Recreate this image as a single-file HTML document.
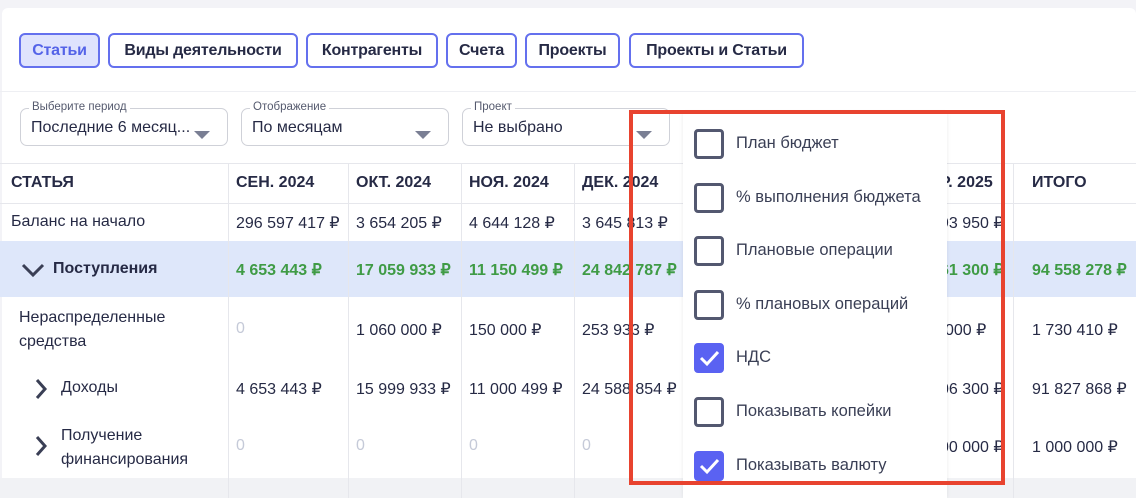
<!DOCTYPE html><html><head><meta charset="utf-8"><style>
*{margin:0;padding:0;box-sizing:border-box}
body{width:1136px;height:498px;overflow:hidden;background:#f3f3f7;font-family:"Liberation Sans",sans-serif;color:#262a45;position:relative}
.card{position:absolute;left:2px;top:8px;width:1134px;height:490px;background:#fff;border-radius:6px}
.a{position:absolute;white-space:nowrap}
.btn{position:absolute;top:33px;height:35px;border:2px solid #6470ee;border-radius:6px;font-weight:bold;font-size:16px;line-height:31px;text-align:center;background:#fff;letter-spacing:-0.2px}
.sel{position:absolute;top:108px;height:38px;border:1.5px solid #cfd1d8;border-radius:7px;font-size:16px}
.sel .l{position:absolute;top:-8px;left:8px;background:#fff;font-size:11.5px;color:#555a6e;padding:0 3px}
.sel .v{position:absolute;left:10px;top:10px}
.tri{position:absolute;width:0;height:0;border-left:8px solid transparent;border-right:8px solid transparent;border-top:8px solid #7a7f94}
.vl{position:absolute;top:163px;width:1px;height:335px;background:#e6e7ec}
.hl{position:absolute;left:0;width:1136px;height:1px;background:#e6e7ec}
.t{position:absolute;font-size:16px;white-space:nowrap}
.h{font-weight:bold;font-size:16px}
.g{color:#3f9b45;font-weight:bold}
.z{color:#c5cad8}
.cb{position:absolute;left:694px;width:30px;height:30px;border:3px solid #535870;border-radius:4px}
.cb.on{background:#5a62f2;border-color:#5a62f2}
.ct{position:absolute;left:736px;font-size:16.5px;color:#3a3f55}
</style></head><body>
<div class="card"></div>
<div class="btn" style="left:19px;width:81px;background:#dfe3fd;color:#5463e8">Статьи</div>
<div class="btn" style="left:108px;width:190px">Виды деятельности</div>
<div class="btn" style="left:306px;width:132px">Контрагенты</div>
<div class="btn" style="left:446px;width:71px">Счета</div>
<div class="btn" style="left:525px;width:95px">Проекты</div>
<div class="btn" style="left:629px;width:175px">Проекты и Статьи</div>
<div class="hl" style="top:91px;background:#eeeff3"></div>
<div class="sel" style="left:20px;width:208px"><span class="l">Выберите период</span><span class="v">Последние 6 месяц...</span><div class="tri" style="left:173px;top:22px"></div></div>
<div class="sel" style="left:241px;width:208px"><span class="l">Отображение</span><span class="v">По месяцам</span><div class="tri" style="left:173px;top:22px"></div></div>
<div class="sel" style="left:462px;width:208px"><span class="l">Проект</span><span class="v">Не выбрано</span><div class="tri" style="left:173px;top:22px"></div></div>
<div class="hl" style="top:163px"></div>
<div class="hl" style="top:203px"></div>
<div class="a" style="left:0;top:241px;width:1136px;height:56px;background:#dee7fa"></div>
<div class="a" style="left:0;top:478px;width:1136px;height:20px;background:#f1f2f5"></div>
<div class="vl" style="left:228px"></div><div class="vl" style="left:348px"></div><div class="vl" style="left:461px"></div><div class="vl" style="left:574px"></div><div class="vl" style="left:1013px"></div>
<div class="t h" style="left:11px;top:174px">СТАТЬЯ</div>
<div class="t h" style="left:236px;top:174px">СЕН. 2024</div>
<div class="t h" style="left:356px;top:174px">ОКТ. 2024</div>
<div class="t h" style="left:469px;top:174px">НОЯ. 2024</div>
<div class="t h" style="left:582px;top:174px">ДЕК. 2024</div>
<div class="t h" style="left:940px;top:174px">Р. 2025</div>
<div class="t h" style="left:1032px;top:174px">ИТОГО</div>
<div class="t" style="left:11px;top:213px">Баланс на начало</div>
<div class="t" style="left:236px;top:213px">296 597 417 ₽</div>
<div class="t" style="left:356px;top:213px">3 654 205 ₽</div>
<div class="t" style="left:469px;top:213px">4 644 128 ₽</div>
<div class="t" style="left:582px;top:213px">3 645 813 ₽</div>
<div class="t" style="left:940px;top:213px">93 950 ₽</div>
<svg class="a" style="left:20px;top:262px" width="26" height="16"><path d="M3 3 L13 13 L23 3" stroke="#3a3f55" stroke-width="3" fill="none"/></svg>
<div class="t h" style="left:53px;top:260px">Поступления</div>
<div class="t g" style="left:236px;top:260px">4 653 443 ₽</div>
<div class="t g" style="left:356px;top:260px">17 059 933 ₽</div>
<div class="t g" style="left:469px;top:260px">11 150 499 ₽</div>
<div class="t g" style="left:582px;top:260px">24 842 787 ₽</div>
<div class="t g" style="left:940px;top:260px">61 300 ₽</div>
<div class="t g" style="left:1032px;top:260px">94 558 278 ₽</div>
<div class="t" style="left:19px;top:306px;line-height:24px">Нераспределенные<br>средства</div>
<div class="t z" style="left:236px;top:320px">0</div>
<div class="t" style="left:356px;top:320px">1 060 000 ₽</div>
<div class="t" style="left:469px;top:320px">150 000 ₽</div>
<div class="t" style="left:582px;top:320px">253 933 ₽</div>
<div class="t" style="left:945px;top:320px">000 ₽</div>
<div class="t" style="left:1032px;top:320px">1 730 410 ₽</div>
<svg class="a" style="left:34px;top:377px" width="14" height="24"><path d="M3 3 L11 12 L3 21" stroke="#3a3f55" stroke-width="3" fill="none"/></svg>
<div class="t" style="left:61px;top:379px">Доходы</div>
<div class="t" style="left:236px;top:379px">4 653 443 ₽</div>
<div class="t" style="left:356px;top:379px">15 999 933 ₽</div>
<div class="t" style="left:469px;top:379px">11 000 499 ₽</div>
<div class="t" style="left:582px;top:379px">24 588 854 ₽</div>
<div class="t" style="left:940px;top:379px">06 300 ₽</div>
<div class="t" style="left:1032px;top:379px">91 827 868 ₽</div>
<svg class="a" style="left:34px;top:434px" width="14" height="24"><path d="M3 3 L11 12 L3 21" stroke="#3a3f55" stroke-width="3" fill="none"/></svg>
<div class="t" style="left:61px;top:424px;line-height:24px">Получение<br>финансирования</div>
<div class="t z" style="left:236px;top:437px">0</div>
<div class="t z" style="left:356px;top:437px">0</div>
<div class="t z" style="left:469px;top:437px">0</div>
<div class="t z" style="left:582px;top:437px">0</div>
<div class="t" style="left:940px;top:437px">00 000 ₽</div>
<div class="t" style="left:1032px;top:437px">1 000 000 ₽</div>
<div class="a" style="left:683px;top:113px;width:264px;height:385px;background:#fff;box-shadow:0 0 4px rgba(0,0,0,.08)"></div>
<div class="cb" style="top:129px"></div><div class="ct" style="top:134px">План бюджет</div>
<div class="cb" style="top:183px"></div><div class="ct" style="top:188px">% выполнения бюджета</div>
<div class="cb" style="top:236px"></div><div class="ct" style="top:241px">Плановые операции</div>
<div class="cb" style="top:290px"></div><div class="ct" style="top:295px">% плановых операций</div>
<div class="cb on" style="top:343px"><svg width="24" height="24" style="position:absolute;left:0;top:0"><path d="M4 12 L10 18 L21 6" stroke="#fff" stroke-width="3" fill="none"/></svg></div><div class="ct" style="top:348px">НДС</div>
<div class="cb" style="top:397px"></div><div class="ct" style="top:402px">Показывать копейки</div>
<div class="cb on" style="top:451px"><svg width="24" height="24" style="position:absolute;left:0;top:0"><path d="M4 12 L10 18 L21 6" stroke="#fff" stroke-width="3" fill="none"/></svg></div><div class="ct" style="top:456px">Показывать валюту</div>
<div class="a" style="left:629px;top:110px;width:376px;height:375px;border:4px solid #e8432f"></div>
</body></html>
